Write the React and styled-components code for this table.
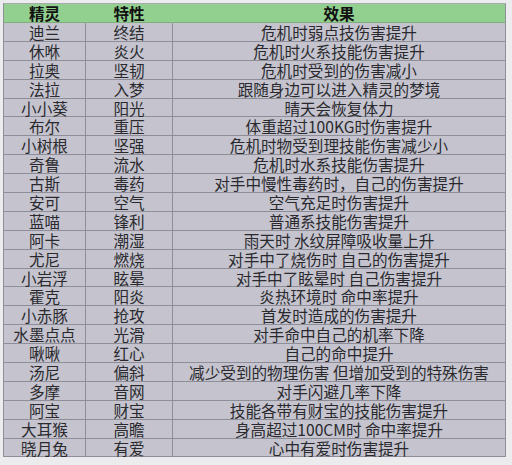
import { Fragment } from "react";
import styled, { createGlobalStyle } from "styled-components";

const GlobalStyle = createGlobalStyle`
  html, body {
    margin: 0;
    padding: 0;
    background: #ececef;
  }
`;

const Page = styled.div`
  width: 512px;
  height: 465px;
  padding: 3px 0 0 3px;
  box-sizing: border-box;
  background: #ececef;
  font-family: "Noto Sans CJK SC", "Noto Sans", sans-serif;
`;

const Grid = styled.div`
  display: grid;
  grid-template-columns: 82px 87px 333px;
  width: 502px;
  border-top: 1px solid #a9a9b0;
  border-left: 1px solid #8e8e98;
`;

const Cell = styled.div`
  display: flex;
  align-items: center;
  justify-content: center;
  height: ${(p) => (p.$head ? "19px" : "18.9px")};
  box-sizing: border-box;
  border-bottom: 1px solid ${(p) => (p.$head ? "#7fae7c" : "#8e8e98")};
  border-right: 1px solid ${(p) => (p.$head && !p.$last ? "#92d08f" : "#8e8e98")};
  background: ${(p) => (p.$head ? "#92d08f" : "#c5c4ce")};
  color: ${(p) => (p.$head ? "#111" : "#2a2a2e")};
  font-size: 15.6px;
  font-weight: ${(p) => (p.$head ? 700 : 400)};
  line-height: 16px;
  white-space: nowrap;
`;

const rows = [
  ["迪兰", "终结", "危机时弱点技伤害提升"],
  ["休咻", "炎火", "危机时火系技能伤害提升"],
  ["拉奥", "坚韧", "危机时受到的伤害减小"],
  ["法拉", "入梦", "跟随身边可以进入精灵的梦境"],
  ["小小葵", "阳光", "晴天会恢复体力"],
  ["布尔", "重压", "体重超过100KG时伤害提升"],
  ["小树根", "坚强", "危机时物受到理技能伤害减少小"],
  ["奇鲁", "流水", "危机时水系技能伤害提升"],
  ["古斯", "毒药", "对手中慢性毒药时，自己的伤害提升"],
  ["安可", "空气", "空气充足时伤害提升"],
  ["蓝喵", "锋利", "普通系技能伤害提升"],
  ["阿卡", "潮湿", "雨天时 水纹屏障吸收量上升"],
  ["尤尼", "燃烧", "对手中了烧伤时 自己的伤害提升"],
  ["小岩浮", "眩晕", "对手中了眩晕时 自己伤害提升"],
  ["霍克", "阳炎", "炎热环境时 命中率提升"],
  ["小赤豚", "抢攻", "首发时造成的伤害提升"],
  ["水墨点点", "光滑", "对手命中自己的机率下降"],
  ["啾啾", "红心", "自己的命中提升"],
  ["汤尼", "偏斜", "减少受到的物理伤害 但增加受到的特殊伤害"],
  ["多摩", "音网", "对手闪避几率下降"],
  ["阿宝", "财宝", "技能各带有财宝的技能伤害提升"],
  ["大耳猴", "高瞻", "身高超过100CM时 命中率提升"],
  ["晓月兔", "有爱", "心中有爱时伤害提升"],
];

export default function App() {
  return (
    <Page>
      <GlobalStyle />
      <Grid>
        <Cell $head>精灵</Cell>
        <Cell $head>特性</Cell>
        <Cell $head $last>效果</Cell>
        {rows.map(([name, trait, effect]) => (
          <Fragment key={name}>
            <Cell>{name}</Cell>
            <Cell>{trait}</Cell>
            <Cell>{effect}</Cell>
          </Fragment>
        ))}
      </Grid>
    </Page>
  );
}
